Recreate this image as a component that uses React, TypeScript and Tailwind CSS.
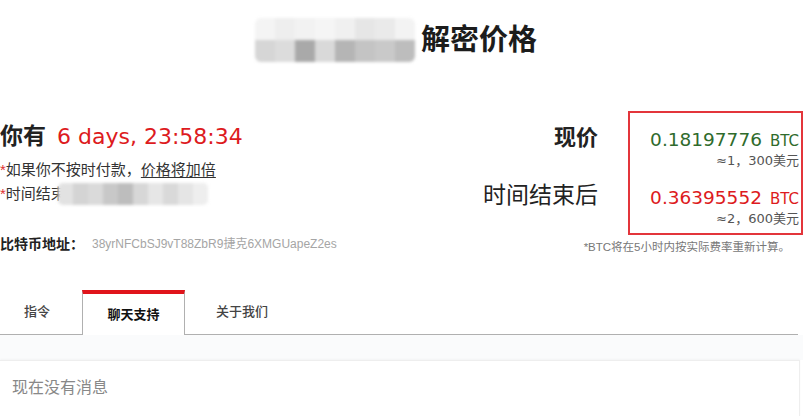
import React from "react";

const font = { fontFamily: '"Liberation Sans", "Noto Sans CJK SC", sans-serif' };
const num = { fontFamily: '"DejaVu Sans", "Noto Sans CJK SC", sans-serif' };

function Blob({ shades, cell, className }: { shades: string[][]; cell: string; className?: string }) {
  return (
    <div className={"flex flex-col blur-[1.5px] " + (className ?? "")}>
      {shades.map((row, i) => (
        <div key={i} className="flex">
          {row.map((c, j) => (
            <div key={j} className={cell} style={{ backgroundColor: c }} />
          ))}
        </div>
      ))}
    </div>
  );
}

export default function App() {
  return (
    <div className="w-[803px] h-[416px] bg-white overflow-hidden text-[#222]" style={font}>
      {/* header */}
      <div className="h-[78px] flex items-center pl-[255px] pt-[2px]">
        <Blob
          className="w-[160px] h-[44px] overflow-hidden rounded-[6px]"
          cell="w-[20px] h-[22px]"
          shades={[
            ["#f4f4f4", "#eeeeee", "#f2f2f2", "#f5f5f5", "#f0f0f0", "#e6e6e6", "#eaeaea", "#f3f3f3"],
            ["#d6d6d6", "#dcdcdc", "#a9a9a9", "#d9d9d9", "#b5b5b5", "#c4c4c4", "#c9c9c9", "#bdbdbd"],
          ]}
        />
        <h1 className="ml-[6px] text-[29px] font-bold leading-none text-[#1c1c1c]">解密价格</h1>
      </div>

      {/* main */}
      <div className="flex h-[179px] mt-[33px]">
        <div className="flex-1 flex flex-col">
          <div className="mt-[9px] h-[32px] flex items-center">
            <span className="text-[23px] font-bold text-[#222]">你有</span>
            <span className="ml-[11px] text-[22px] text-[#dd1a20]" style={num}>6 days, 23:58:34</span>
          </div>
          <div className="mt-[6px] h-[24px] flex items-center text-[15px] text-[#333]">
            <span className="text-[#e03030]">*</span>
            <span>如果你不按时付款，</span>
            <span className="underline underline-offset-2">价格将加倍</span>
          </div>
          <div className="h-[24px] flex items-center text-[15px] text-[#333]">
            <span className="text-[#e03030]">*</span>
            <span>时间结束</span>
            <Blob
              className="-ml-[8px] w-[150px] h-[22px] overflow-hidden rounded-[5px]"
              cell="w-[15px] h-[22px]"
              shades={[["#e2e2e2", "#d4d4d4", "#dadada", "#c8c8c8", "#bdbdbd", "#d7d7d7", "#e6e6e6", "#d9d9d9", "#e5e5e5", "#eeeeee"]]}
            />
          </div>
          <div className="mt-[29px] h-[18px] flex items-center">
            <span className="text-[14px] font-bold text-[#222]">比特币地址：</span>
            <span className="ml-[8px] text-[12px] text-[#a5a5a5]">38yrNFCbSJ9vT88ZbR9捷克6XMGUapeZ2es</span>
          </div>
        </div>

        <div className="flex flex-col items-end">
          <div className="flex">
            <div className="flex flex-col items-end mr-[30px]">
              <div className="mt-[12px] h-[28px] flex items-center text-[22px] font-bold text-[#222]">现价</div>
              <div className="mt-[30px] h-[28px] flex items-center text-[23px] text-[#222]">时间结束后</div>
            </div>
            <div className="w-[175px] h-[124px] border-2 border-[#e3353b] flex flex-col items-end pr-[2px] pt-[13px]" style={num}>
              <div className="h-[24px] flex items-baseline">
                <span className="text-[18.5px] text-[#2f6b2c]">0.18197776</span>
                <span className="ml-[8px] text-[15px] text-[#2f6b2c]">BTC</span>
              </div>
              <div className="h-[22px] flex items-center text-[13px] text-[#555]">≈1，300美元</div>
              <div className="mt-[12px] h-[24px] flex items-baseline">
                <span className="text-[18.5px] text-[#dd1a20]">0.36395552</span>
                <span className="ml-[8px] text-[15px] text-[#dd1a20]">BTC</span>
              </div>
              <div className="h-[22px] flex items-center text-[13px] text-[#555]">≈2，600美元</div>
            </div>
          </div>
          <div className="mt-[4px] mr-[13px] h-[18px] flex items-center text-[11.5px] text-[#777]">
            *BTC将在5小时内按实际费率重新计算。
          </div>
        </div>
      </div>

      {/* tabs */}
      <div className="w-[798px] h-[45px] flex border-b border-[#b0b0b0]">
        <div className="w-[82px] pl-[24px] flex items-center text-[13px] font-medium text-[#444]">指令</div>
        <div className="w-[103px] -mb-[1px] bg-white border-t-4 border-t-[#e0141b] border-x border-x-[#b0b0b0] flex items-center justify-center text-[13px] font-bold text-[#111]">
          聊天支持
        </div>
        <div className="pl-[31px] flex items-center text-[13px] font-medium text-[#444]">关于我们</div>
      </div>

      {/* messages */}
      <div className="h-[25px] bg-[#fafbfc]" />
      <div className="w-[800px] h-[60px] bg-white border-t border-r border-[#eeeeee] shadow-[0_-1px_2px_rgba(0,0,0,0.03)] pl-[12px] pt-[15px] text-[16px] text-[#888]">
        现在没有消息
      </div>
    </div>
  );
}
